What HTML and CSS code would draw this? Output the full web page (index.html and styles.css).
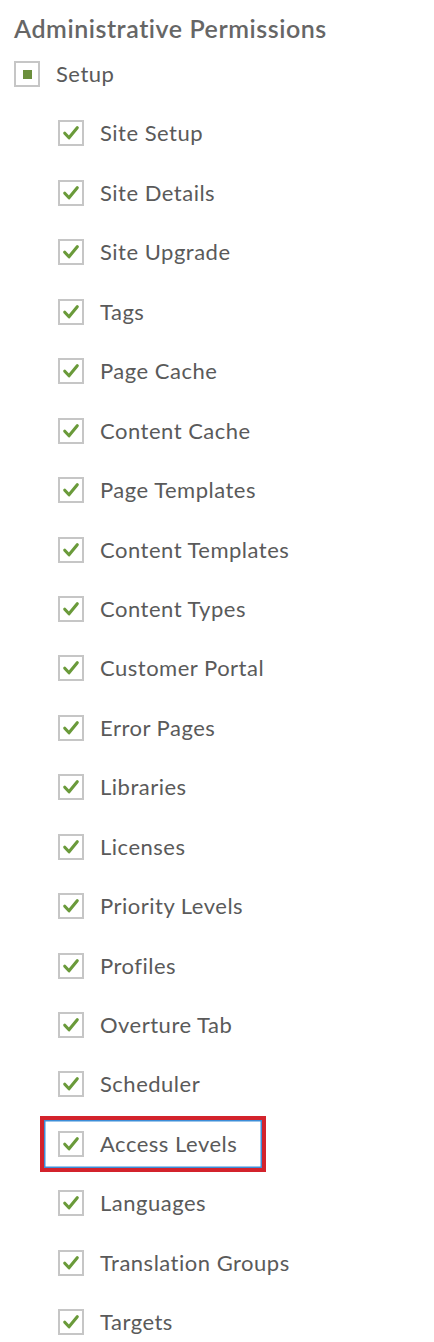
FILE: index.html
```html
<!DOCTYPE html>
<html>
<head>
<meta charset="utf-8">
<link rel="stylesheet" href="styles.css">
</head>
<body>
<div class="perms">
  <h2 class="title">Administrative Permissions</h2>
  <div class="row">
    <span class="box partial"><span class="dot"></span></span>
    <span class="label">Setup</span>
  </div>
  <ul class="children">
    <li class="row"><span class="box"><svg viewBox="0 0 16 16"><path d="M3 8.2 L6.4 11.8 L13 3.8" /></svg></span><span class="label">Site Setup</span></li>
    <li class="row"><span class="box"><svg viewBox="0 0 16 16"><path d="M3 8.2 L6.4 11.8 L13 3.8" /></svg></span><span class="label">Site Details</span></li>
    <li class="row"><span class="box"><svg viewBox="0 0 16 16"><path d="M3 8.2 L6.4 11.8 L13 3.8" /></svg></span><span class="label">Site Upgrade</span></li>
    <li class="row"><span class="box"><svg viewBox="0 0 16 16"><path d="M3 8.2 L6.4 11.8 L13 3.8" /></svg></span><span class="label">Tags</span></li>
    <li class="row"><span class="box"><svg viewBox="0 0 16 16"><path d="M3 8.2 L6.4 11.8 L13 3.8" /></svg></span><span class="label">Page Cache</span></li>
    <li class="row"><span class="box"><svg viewBox="0 0 16 16"><path d="M3 8.2 L6.4 11.8 L13 3.8" /></svg></span><span class="label">Content Cache</span></li>
    <li class="row"><span class="box"><svg viewBox="0 0 16 16"><path d="M3 8.2 L6.4 11.8 L13 3.8" /></svg></span><span class="label">Page Templates</span></li>
    <li class="row"><span class="box"><svg viewBox="0 0 16 16"><path d="M3 8.2 L6.4 11.8 L13 3.8" /></svg></span><span class="label">Content Templates</span></li>
    <li class="row"><span class="box"><svg viewBox="0 0 16 16"><path d="M3 8.2 L6.4 11.8 L13 3.8" /></svg></span><span class="label">Content Types</span></li>
    <li class="row"><span class="box"><svg viewBox="0 0 16 16"><path d="M3 8.2 L6.4 11.8 L13 3.8" /></svg></span><span class="label">Customer Portal</span></li>
    <li class="row"><span class="box"><svg viewBox="0 0 16 16"><path d="M3 8.2 L6.4 11.8 L13 3.8" /></svg></span><span class="label">Error Pages</span></li>
    <li class="row"><span class="box"><svg viewBox="0 0 16 16"><path d="M3 8.2 L6.4 11.8 L13 3.8" /></svg></span><span class="label">Libraries</span></li>
    <li class="row"><span class="box"><svg viewBox="0 0 16 16"><path d="M3 8.2 L6.4 11.8 L13 3.8" /></svg></span><span class="label">Licenses</span></li>
    <li class="row"><span class="box"><svg viewBox="0 0 16 16"><path d="M3 8.2 L6.4 11.8 L13 3.8" /></svg></span><span class="label">Priority Levels</span></li>
    <li class="row"><span class="box"><svg viewBox="0 0 16 16"><path d="M3 8.2 L6.4 11.8 L13 3.8" /></svg></span><span class="label">Profiles</span></li>
    <li class="row"><span class="box"><svg viewBox="0 0 16 16"><path d="M3 8.2 L6.4 11.8 L13 3.8" /></svg></span><span class="label">Overture Tab</span></li>
    <li class="row"><span class="box"><svg viewBox="0 0 16 16"><path d="M3 8.2 L6.4 11.8 L13 3.8" /></svg></span><span class="label">Scheduler</span></li>
    <li class="row highlight"><span class="box"><svg viewBox="0 0 16 16"><path d="M3 8.2 L6.4 11.8 L13 3.8" /></svg></span><span class="label">Access Levels</span></li>
    <li class="row"><span class="box"><svg viewBox="0 0 16 16"><path d="M3 8.2 L6.4 11.8 L13 3.8" /></svg></span><span class="label">Languages</span></li>
    <li class="row"><span class="box"><svg viewBox="0 0 16 16"><path d="M3 8.2 L6.4 11.8 L13 3.8" /></svg></span><span class="label">Translation Groups</span></li>
    <li class="row"><span class="box"><svg viewBox="0 0 16 16"><path d="M3 8.2 L6.4 11.8 L13 3.8" /></svg></span><span class="label">Targets</span></li>
  </ul>
</div>
</body>
</html>
```
FILE: styles.css
```css
html, body {
  margin: 0;
  padding: 0;
  background: #ffffff;
}
.perms {
  padding-left: 14px;
  font-family: Lato, "Open Sans", sans-serif;
  color: #5a5a5a;
}
.title {
  margin: 0;
  padding-top: 12.5px;
  height: 31.8px;
  line-height: 30px;
  font-size: 25px;
  font-weight: 600;
  letter-spacing: 0.55px;
  color: #666666;
}
.row {
  display: flex;
  align-items: center;
  gap: 16px;
  height: 59.45px;
  position: relative;
}
.children {
  list-style: none;
  margin: 0;
  padding: 0 0 0 44px;
}
.box {
  box-sizing: border-box;
  width: 26px;
  height: 26px;
  border: 2px solid #c6c6c6;
  background: #fff;
  display: flex;
  align-items: center;
  justify-content: center;
  flex: none;
}
.box svg {
  width: 20px;
  height: 20px;
}
.box path {
  fill: none;
  stroke: #6a9a3a;
  stroke-width: 2.5;
  stroke-linecap: round;
  stroke-linejoin: round;
}
.dot {
  width: 9px;
  height: 9px;
  background: #6b8f3c;
}
.label {
  font-size: 22px;
  line-height: 24px;
  letter-spacing: 0.5px;
  color: #5a5a5a;
}
.highlight::after {
  content: "";
  position: absolute;
  left: -18px;
  top: 2px;
  width: 226px;
  height: 56px;
  box-sizing: border-box;
  border: 4px solid #d3232c;
  box-shadow: inset 0 0 0 1.5px #3c8ed8;
}
```
